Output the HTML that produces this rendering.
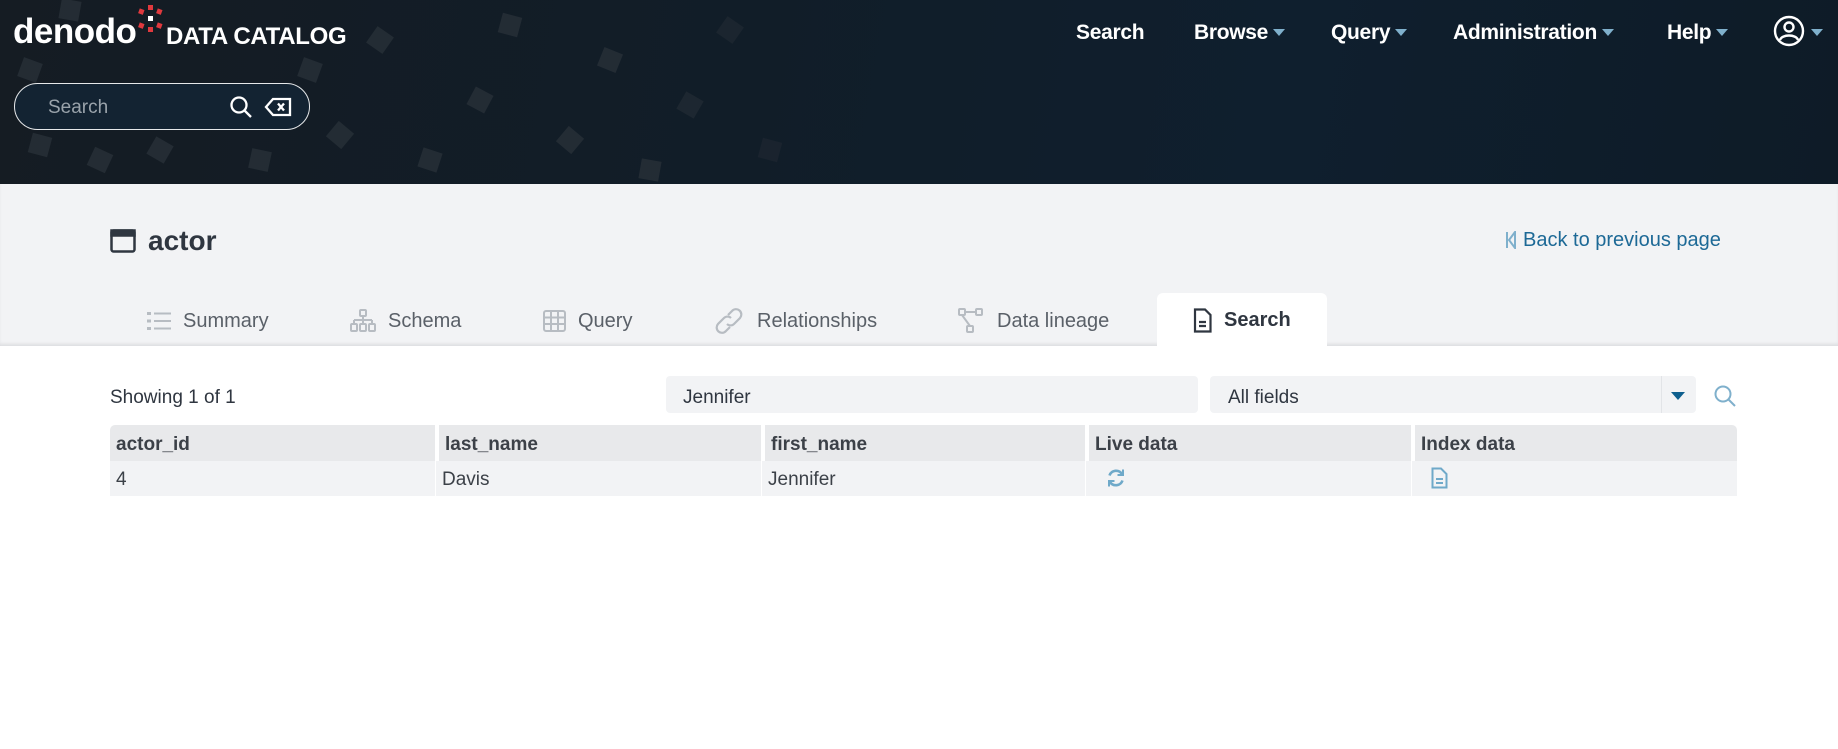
<!DOCTYPE html>
<html><head><meta charset="utf-8"><style>
*{margin:0;padding:0;box-sizing:border-box}
body{width:1838px;height:749px;background:#fff;font-family:"Liberation Sans",sans-serif;position:relative;overflow:hidden;color:#333}
.hdr{position:absolute;left:0;top:0;width:1838px;height:184px;background:linear-gradient(100deg,#151c23 0%,#111d28 40%,#0f1f2e 70%,#0e1b27 100%);overflow:hidden}
.sq{position:absolute;width:20px;height:20px;background:#2a323a;opacity:.75}
.a{position:absolute;white-space:nowrap}
.nav{color:#fff;font-weight:bold;font-size:21px;top:21px;letter-spacing:-0.3px}
.tri{display:inline-block;width:0;height:0;border-left:6px solid transparent;border-right:6px solid transparent;border-top:7px solid #7fb0cc;margin-left:5px;vertical-align:3px}
.band{position:absolute;left:0;top:184px;width:1838px;height:162px;background:#f2f3f5;box-shadow:inset 0 -3px 3px -1px #dcdde0}
.tab{font-size:20px;color:#5a6068;top:310px}
.th{position:absolute;top:425px;height:36px;background:#e8e9eb;font-weight:bold;font-size:19px;color:#3c4148;padding:9px 6px}
.td{position:absolute;top:461px;height:35px;background:#f2f3f5;font-size:19px;color:#3c4148;padding:8px 6px}
</style></head><body>
<div class="hdr">
<div class="sq" style="left:20px;top:60px;transform:rotate(20deg)"></div>
<div class="sq" style="left:60px;top:0px;transform:rotate(10deg)"></div>
<div class="sq" style="left:90px;top:150px;transform:rotate(25deg)"></div>
<div class="sq" style="left:30px;top:135px;transform:rotate(15deg)"></div>
<div class="sq" style="left:150px;top:140px;transform:rotate(30deg)"></div>
<div class="sq" style="left:250px;top:150px;transform:rotate(12deg)"></div>
<div class="sq" style="left:330px;top:125px;transform:rotate(40deg)"></div>
<div class="sq" style="left:300px;top:60px;transform:rotate(20deg)"></div>
<div class="sq" style="left:370px;top:30px;transform:rotate(35deg)"></div>
<div class="sq" style="left:420px;top:150px;transform:rotate(18deg)"></div>
<div class="sq" style="left:470px;top:90px;transform:rotate(28deg)"></div>
<div class="sq" style="left:500px;top:15px;transform:rotate(15deg)"></div>
<div class="sq" style="left:560px;top:130px;transform:rotate(40deg)"></div>
<div class="sq" style="left:600px;top:50px;transform:rotate(22deg)"></div>
<div class="sq" style="left:640px;top:160px;transform:rotate(10deg)"></div>
<div class="sq" style="left:680px;top:95px;transform:rotate(30deg);opacity:.5"></div>
<div class="sq" style="left:200px;top:95px;transform:rotate(25deg);opacity:.4"></div>
<div class="sq" style="left:720px;top:20px;transform:rotate(35deg);opacity:.4"></div>
<div class="sq" style="left:760px;top:140px;transform:rotate(15deg);opacity:.35"></div>
<div class="a" style="left:13px;top:12px;color:#fff;font-size:35px;font-weight:bold;letter-spacing:-0.5px">denodo</div>
<svg class="a" style="left:136px;top:4px" width="30" height="30" viewBox="0 0 30 30"><g fill="#e0393e"><rect x="12" y="1" width="5" height="5"/><rect x="3" y="5" width="5" height="5" transform="rotate(20 5 7)"/><rect x="21" y="5" width="5" height="5" transform="rotate(20 23 7)"/><rect x="3" y="19" width="5" height="5" transform="rotate(20 5 21)"/><rect x="21" y="19" width="5" height="5" transform="rotate(20 23 21)"/><rect x="12" y="23" width="5" height="5"/></g><rect x="12" y="12" width="5" height="5" fill="#fff"/></svg>
<div class="a" style="left:166px;top:23px;color:#fff;font-size:24px;font-weight:bold;letter-spacing:-0.3px">DATA CATALOG</div>
<div class="a" style="left:14px;top:83px;width:296px;height:47px;border:1.5px solid #e6e8ea;border-radius:24px;background:#132332"></div>
<div class="a" style="left:48px;top:97px;color:#9aa3ab;font-size:19px">Search</div>
<svg class="a" style="left:229px;top:95px" width="24" height="24" viewBox="0 0 24 24" fill="none" stroke="#fff" stroke-width="2.3"><circle cx="10" cy="10" r="7.5"/><path d="M15.5 15.5 L22 22"/></svg>
<svg class="a" style="left:264px;top:97px" width="28" height="20" viewBox="0 0 28 20" fill="none" stroke="#fff" stroke-width="2.3"><path d="M9 2 H26 V18 H9 L2 10 Z"/><path d="M14 6.5 L20 13.5 M20 6.5 L14 13.5"/></svg>
<div class="a nav" style="left:1076px">Search</div>
<div class="a nav" style="left:1194px">Browse<span class="tri"></span></div>
<div class="a nav" style="left:1331px">Query<span class="tri"></span></div>
<div class="a nav" style="left:1453px">Administration<span class="tri"></span></div>
<div class="a nav" style="left:1667px">Help<span class="tri"></span></div>
<svg class="a" style="left:1773px;top:15px" width="32" height="32" viewBox="0 0 32 32" fill="none" stroke="#fff" stroke-width="2.4"><circle cx="16" cy="16" r="14"/><circle cx="16" cy="12" r="4.5"/><path d="M7 25 C9 19 23 19 25 25"/></svg>
<span class="a tri" style="left:1806px;top:29px"></span>
</div>
<div class="band"></div>
<svg class="a" style="left:110px;top:229px" width="26" height="24" viewBox="0 0 26 24" fill="none" stroke="#2f3640" stroke-width="2.5"><rect x="1.5" y="1.5" width="23" height="21" rx="2"/><rect x="1.5" y="1.5" width="23" height="5" fill="#2f3640"/></svg>
<div class="a" style="left:148px;top:225px;font-size:28px;font-weight:bold;color:#2f3640">actor</div>
<svg class="a" style="left:1505px;top:231px" width="12" height="18" viewBox="0 0 12 18" fill="none" stroke="#7fb0cc" stroke-width="2"><path d="M2 1 V17 M10 1 L4 9 L10 17 Z"/></svg>
<div class="a" style="left:1523px;top:229px;font-size:20px;color:#1d6996">Back to previous page</div>
<svg class="a" style="left:147px;top:311px" width="24" height="20" viewBox="0 0 24 20" fill="#b7bcc2"><rect x="0" y="1" width="4" height="3"/><rect x="0" y="8.5" width="4" height="3"/><rect x="0" y="16" width="4" height="3"/><rect x="7" y="1.5" width="17" height="2"/><rect x="7" y="9" width="17" height="2"/><rect x="7" y="16.5" width="17" height="2"/></svg>
<div class="a tab" style="left:183px">Summary</div>
<svg class="a" style="left:349px;top:309px" width="28" height="24" viewBox="0 0 28 24" fill="none" stroke="#b7bcc2" stroke-width="2"><rect x="11" y="1" width="6" height="6" rx="1"/><path d="M14 7 V11 M5 11 H23 M5 11 V15 M14 11 V15 M23 11 V15"/><rect x="2" y="15" width="6" height="7" rx="1"/><rect x="11" y="15" width="6" height="7" rx="1"/><rect x="20" y="15" width="6" height="7" rx="1"/></svg>
<div class="a tab" style="left:388px">Schema</div>
<svg class="a" style="left:543px;top:310px" width="23" height="22" viewBox="0 0 23 22" fill="none" stroke="#b7bcc2" stroke-width="2"><rect x="1" y="1" width="21" height="20" rx="2"/><path d="M1 7.5 H22 M1 14 H22 M8 1 V21 M15 1 V21"/></svg>
<div class="a tab" style="left:578px">Query</div>
<svg class="a" style="left:715px;top:308px" width="28" height="26" viewBox="0 0 28 26" fill="none" stroke="#b7bcc2" stroke-width="2.2"><path d="M13 7 L17 3 A5 5 0 0 1 25 10 L19 16 A5 5 0 0 1 12 16"/><path d="M15 19 L11 23 A5 5 0 0 1 3 16 L9 10 A5 5 0 0 1 16 10"/></svg>
<div class="a tab" style="left:757px">Relationships</div>
<svg class="a" style="left:958px;top:308px" width="26" height="26" viewBox="0 0 26 26" fill="none" stroke="#b7bcc2" stroke-width="2"><rect x="1" y="1" width="6" height="6" rx="1"/><rect x="18" y="1" width="6" height="6" rx="1"/><rect x="9" y="18" width="6" height="6" rx="1"/><path d="M7 4 H18 M4 7 L12 18"/></svg>
<div class="a tab" style="left:997px">Data lineage</div>
<div class="a" style="left:1157px;top:293px;width:170px;height:54px;background:#fff;border-radius:6px 6px 0 0"></div>
<svg class="a" style="left:1193px;top:308px" width="19" height="25" viewBox="0 0 19 25" fill="none" stroke="#2f3640" stroke-width="2.2"><path d="M2 1.5 H12 L17.5 7 V23.5 H2 Z"/><path d="M6 14 H13 M6 18 H13"/></svg>
<div class="a" style="left:1224px;top:309px;font-size:20px;font-weight:bold;color:#2f3640">Search</div>
<div class="a" style="left:110px;top:387px;font-size:19px;color:#2f3640">Showing 1 of 1</div>
<div class="a" style="left:666px;top:376px;width:532px;height:37px;background:#f2f3f5;border-radius:4px"></div>
<div class="a" style="left:683px;top:387px;font-size:19px;color:#2f3640">Jennifer</div>
<div class="a" style="left:1210px;top:376px;width:486px;height:37px;background:#f2f3f5;border-radius:4px"></div>
<div class="a" style="left:1661px;top:376px;width:1px;height:37px;background:#e2e4e7"></div>
<div class="a" style="left:1228px;top:387px;font-size:19px;color:#2f3640">All fields</div>
<div class="a" style="left:1671px;top:392px;width:0;height:0;border-left:7px solid transparent;border-right:7px solid transparent;border-top:8px solid #0e5f8e"></div>
<svg class="a" style="left:1713px;top:384px" width="24" height="24" viewBox="0 0 24 24" fill="none" stroke="#7fb0cc" stroke-width="2"><circle cx="10" cy="10" r="7.5"/><path d="M15.5 15.5 L22 22"/></svg>
<div class="th" style="left:110px;width:325px;border-radius:5px 0 0 0">actor_id</div>
<div class="th" style="left:435px;width:326px;border-left:4px solid #fff">last_name</div>
<div class="th" style="left:761px;width:324px;border-left:4px solid #fff">first_name</div>
<div class="th" style="left:1085px;width:326px;border-left:4px solid #fff">Live data</div>
<div class="th" style="left:1411px;width:326px;border-left:4px solid #fff;border-radius:0 5px 0 0">Index data</div>
<div class="td" style="left:110px;width:325px">4</div>
<div class="td" style="left:435px;width:326px;border-left:1px solid #fff">Davis</div>
<div class="td" style="left:761px;width:324px;border-left:1px solid #fff">Jennifer</div>
<div class="td" style="left:1085px;width:326px;border-left:1px solid #fff"></div>
<div class="td" style="left:1411px;width:326px;border-left:1px solid #fff"></div>
<svg class="a" style="left:1106px;top:468px" width="20" height="20" viewBox="0 0 20 20" fill="none" stroke="#6fa9c9" stroke-width="2.6"><path d="M16 6 A7 7 0 0 0 3.5 7.5"/><path d="M4 14 A7 7 0 0 0 16.5 12.5"/><path d="M17 1.5 V7 H11.5" stroke-width="2"/><path d="M3 18.5 V13 H8.5" stroke-width="2"/></svg>
<svg class="a" style="left:1431px;top:467px" width="17" height="22" viewBox="0 0 17 22" fill="none" stroke="#6fa9c9" stroke-width="2"><path d="M1.5 1.5 H10 L15.5 7 V20.5 H1.5 Z"/><path d="M5 12 H12 M5 16 H12"/></svg>
</body></html>
